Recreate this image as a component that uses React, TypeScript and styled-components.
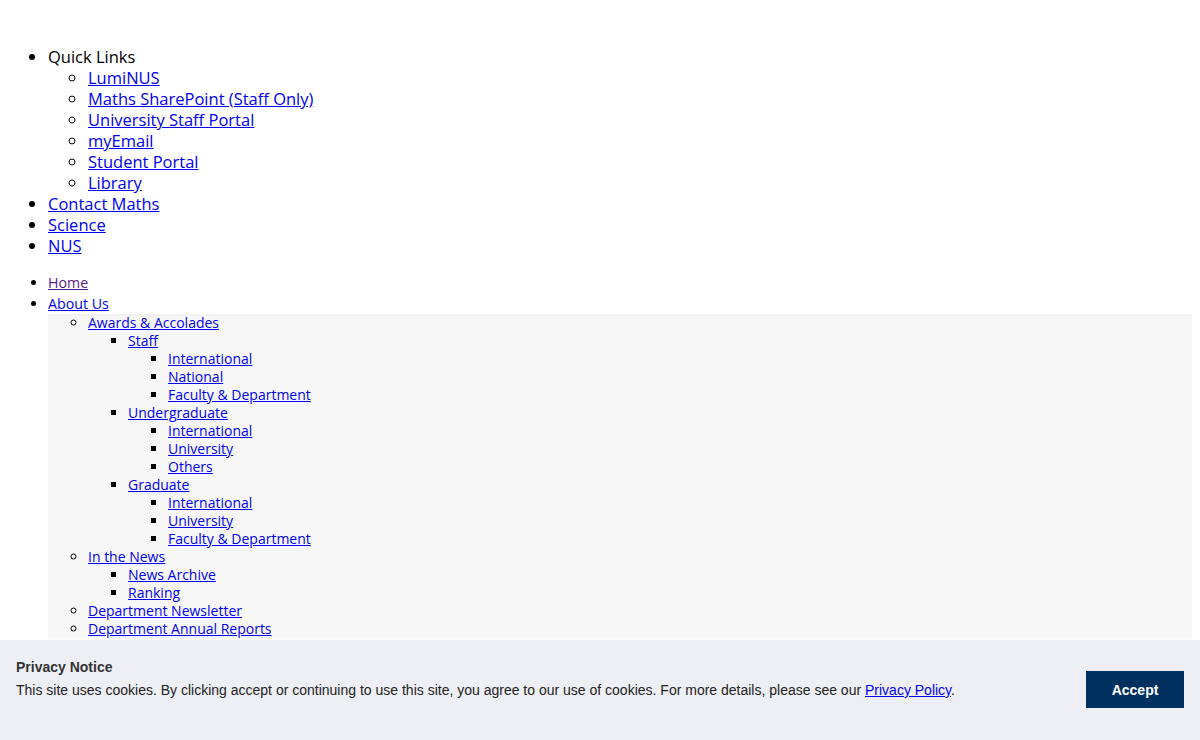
import React from "react";
import styled, { createGlobalStyle } from "styled-components";

const GlobalStyle = createGlobalStyle`
  html, body { background: #ffffff; }
  body {
    margin: 8px;
    font-family: "Open Sans", "Noto Sans", sans-serif;
    color: #000000;
  }
  a { color: #0000ee; }
`;

const Header = styled.header`
  padding-top: 22px;
`;

const TopList = styled.ul`
  margin: 16px 0;
  padding-left: 40px;
  list-style: disc;
  font-size: 16.5px;
  line-height: 21px;
`;

const SubList = styled.ul<{ $level: number; $shaded?: boolean }>`
  margin: 0;
  padding-left: 40px;
  list-style: ${(p) => (p.$level === 2 ? "circle" : "square")};
  background: ${(p) => (p.$shaded ? "#f7f7f7" : "transparent")};
  box-shadow: ${(p) => (p.$shaded ? "inset 0 2px 0 #f2f2f2" : "none")};
`;

const NavList = styled.ul`
  margin: 16px 0;
  padding-left: 40px;
  list-style: disc;
  font-size: 14.2px;
  line-height: 21px;
`;

const MenuSub = styled(SubList)`
  font-size: 14px;
  line-height: 18px;
`;

const Item = styled.li``;

const Link = styled.a<{ $visited?: boolean }>`
  color: ${(p) => (p.$visited ? "#551a8b" : "#0000ee")};
  text-decoration: underline;
`;

const Banner = styled.div`
  position: fixed;
  left: 0;
  right: 0;
  bottom: 0;
  height: 100px;
  box-sizing: border-box;
  padding: 18px 16px 0 16px;
  background: #eeeff4;
  display: flex;
  justify-content: space-between;
  font-family: "Liberation Sans", Arial, sans-serif;
  font-size: 14px;
  color: #222222;
`;

const BannerText = styled.div`
  display: flex;
  flex-direction: column;
  gap: 5px;
`;

const BannerTitle = styled.div`
  font-weight: bold;
  line-height: 18px;
  color: #333333;
`;

const BannerBody = styled.p`
  margin: 0;
  line-height: 18px;
`;

const PolicyLink = styled.a`
  color: #0000ee;
  text-decoration: underline;
`;

const AcceptButton = styled.button`
  align-self: flex-start;
  margin-top: 13px;
  width: 98px;
  height: 37px;
  border: none;
  background: #00305f;
  color: #ffffff;
  font-family: "Liberation Sans", Arial, sans-serif;
  font-weight: bold;
  font-size: 14px;
  cursor: pointer;
`;

const quickLinks = [
  "LumiNUS",
  "Maths SharePoint (Staff Only)",
  "University Staff Portal",
  "myEmail",
  "Student Portal",
  "Library",
];

type Node = { label: string; children?: Node[] };

const aboutUs: Node[] = [
  {
    label: "Awards & Accolades",
    children: [
      {
        label: "Staff",
        children: [
          { label: "International" },
          { label: "National" },
          { label: "Faculty & Department" },
        ],
      },
      {
        label: "Undergraduate",
        children: [
          { label: "International" },
          { label: "University" },
          { label: "Others" },
        ],
      },
      {
        label: "Graduate",
        children: [
          { label: "International" },
          { label: "University" },
          { label: "Faculty & Department" },
        ],
      },
    ],
  },
  {
    label: "In the News",
    children: [{ label: "News Archive" }, { label: "Ranking" }],
  },
  { label: "Department Newsletter" },
  { label: "Department Annual Reports" },
];

const Tree: React.FC<{ nodes: Node[]; level: number }> = ({ nodes, level }) => (
  <SubList $level={level}>
    {nodes.map((n, i) => (
      <Item key={i}>
        <Link href="#">{n.label}</Link>
        {n.children && <Tree nodes={n.children} level={level + 1} />}
      </Item>
    ))}
  </SubList>
);

export default function App() {
  return (
    <>
      <GlobalStyle />
      <Header>
        <TopList>
          <Item>
            Quick Links
            <SubList $level={2}>
              {quickLinks.map((q) => (
                <Item key={q}>
                  <Link href="#">{q}</Link>
                </Item>
              ))}
            </SubList>
          </Item>
          <Item>
            <Link href="#">Contact Maths</Link>
          </Item>
          <Item>
            <Link href="#">Science</Link>
          </Item>
          <Item>
            <Link href="#">NUS</Link>
          </Item>
        </TopList>
      </Header>
      <nav>
        <NavList>
          <Item>
            <Link href="#" $visited>
              Home
            </Link>
          </Item>
          <Item>
            <Link href="#">About Us</Link>
            <MenuSub $level={2} $shaded>
              {aboutUs.map((n, i) => (
                <Item key={i}>
                  <Link href="#">{n.label}</Link>
                  {n.children && <Tree nodes={n.children} level={3} />}
                </Item>
              ))}
            </MenuSub>
          </Item>
        </NavList>
      </nav>
      <Banner>
        <BannerText>
          <BannerTitle>Privacy Notice</BannerTitle>
          <BannerBody>
            This site uses cookies. By clicking accept or continuing to use this site, you agree to our use of
            cookies. For more details, please see our <PolicyLink href="#">Privacy Policy</PolicyLink>.
          </BannerBody>
        </BannerText>
        <AcceptButton>Accept</AcceptButton>
      </Banner>
    </>
  );
}
